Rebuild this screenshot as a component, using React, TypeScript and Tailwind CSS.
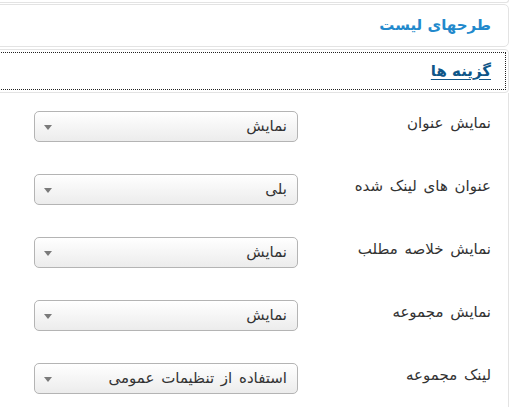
import React from "react";

const rows: { label: string; value: string }[] = [
  { label: "نمایش عنوان", value: "نمایش" },
  { label: "عنوان های لینک شده", value: "بلی" },
  { label: "نمایش خلاصه مطلب", value: "نمایش" },
  { label: "نمایش مجموعه", value: "نمایش" },
  { label: "لینک مجموعه", value: "استفاده از تنظیمات عمومی" },
];

function Select({ value }: { value: string }) {
  return (
    <div className="w-[264px] h-[31px] rounded-[5px] border border-[#b4b4b4] bg-gradient-to-b from-white to-[#ececec] flex items-center justify-between pr-[10px] pl-[9px]">
      <span className="text-[15px] text-[#333] leading-none [word-spacing:2px]">{value}</span>
      <svg width="8" height="5" viewBox="0 0 8 5" className="mt-[1px]">
        <path d="M0 0 H8 L4 5 Z" fill="#7a7a7a" />
      </svg>
    </div>
  );
}

export default function App() {
  return (
    <div
      dir="rtl"
      className="w-[520px] h-[407px] overflow-hidden bg-white"
      style={{ fontFamily: '"DejaVu Sans", Tahoma, sans-serif' }}
    >
      <div className="pr-[11px] -ml-[8px]">
        <div className="h-[3px] border-b border-l border-r border-[#e3e3e3] rounded-b-[4px]" />
        <div className="mt-[1px] h-[43px] border border-[#e3e3e3] rounded-[5px] flex items-center pr-[17px]">
          <span className="text-[15px] font-bold text-[#2289cc] leading-none">طرحهای لیست</span>
        </div>
        <div className="mt-[2px] h-[44px] border border-[#e3e3e3] rounded-[4px] p-[2px]">
          <div className="h-full border border-dotted border-[#222] flex items-center pr-[14px]">
            <span className="text-[15px] font-bold text-[#0f5688] underline underline-offset-[3px] leading-none">
              گزینه ها
            </span>
          </div>
        </div>
        <div className="border-r border-[#e3e3e3] h-[320px] pr-[17px] pt-[18px]">
          {rows.map((r) => (
            <div key={r.label} className="h-[63px] flex items-start">
              <div className="w-[193px] text-[15px] text-[#333] leading-none pt-[5px] [word-spacing:2px]">
                {r.label}
              </div>
              <Select value={r.value} />
            </div>
          ))}
        </div>
      </div>
    </div>
  );
}
